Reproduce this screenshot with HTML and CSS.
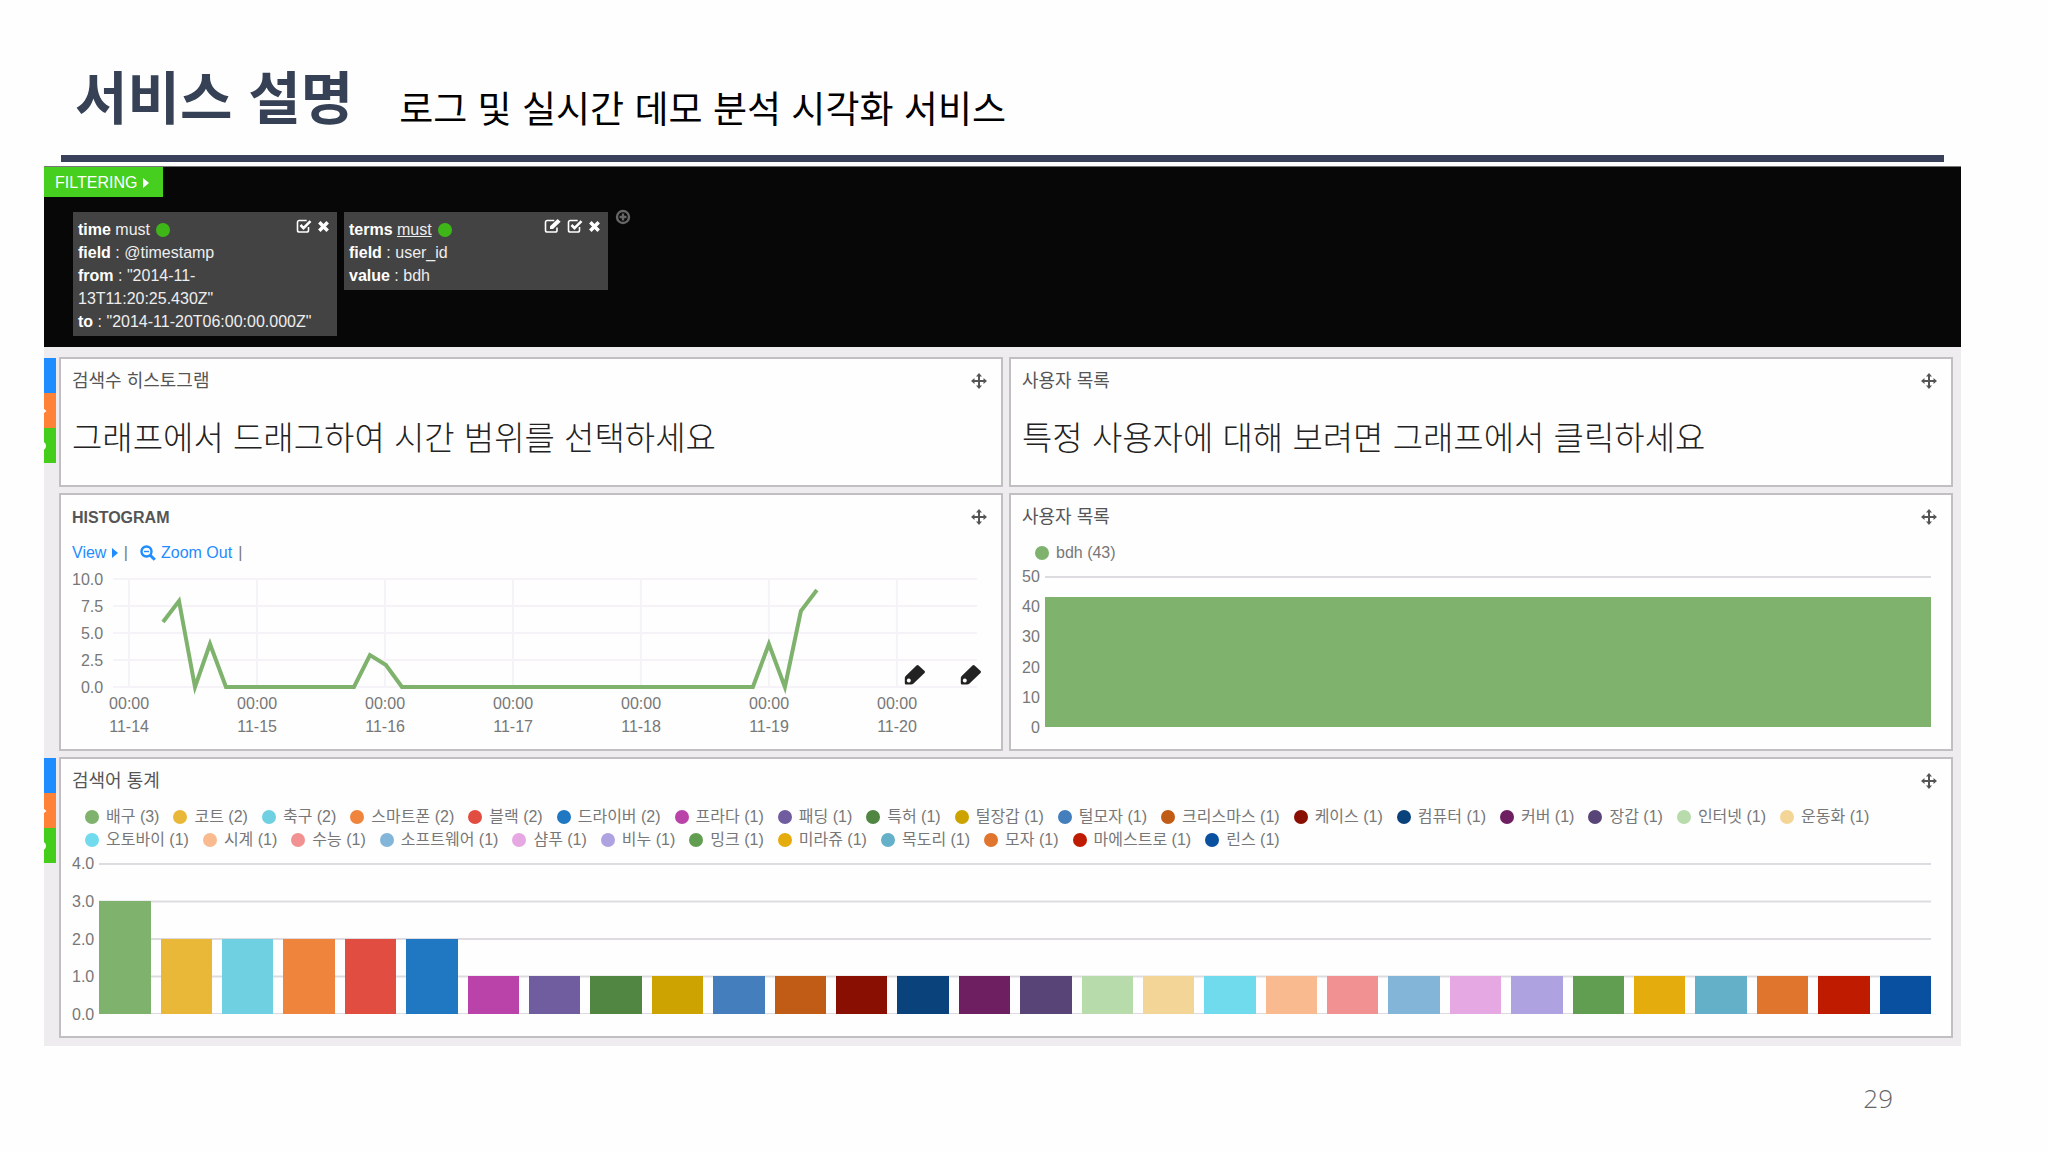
FILE: index.html
```html
<!DOCTYPE html>
<html lang="ko">

<head>
    <meta charset="UTF-8">
    <meta name="viewport" content="width=device-width, initial-scale=1.0">
    <title>서비스 설명</title>
    <link rel="stylesheet" href="styles.css">
</head>

<body>
    <!-- Icon set -->
    <svg class="icon-set" aria-hidden="true">
        <symbol id="icon-check" viewBox="0 0 16 16">
            <path d="M12.5 9v3.2a1.8 1.8 0 0 1-1.8 1.8H3.3a1.8 1.8 0 0 1-1.8-1.8V4.3a1.8 1.8 0 0 1 1.8-1.8h7.4" fill="none" stroke="currentColor" stroke-width="1.6" />
            <path d="M4.5 7l3 3.2L14.5 3.2" fill="none" stroke="currentColor" stroke-width="2.6" />
        </symbol>
        <symbol id="icon-edit" viewBox="0 0 18 16">
            <path d="M13 9.5v2.7a1.8 1.8 0 0 1-1.8 1.8H3.3a1.8 1.8 0 0 1-1.8-1.8V4.3a1.8 1.8 0 0 1 1.8-1.8h7" fill="none" stroke="currentColor" stroke-width="1.6" />
            <path d="M6 11V8.3L13.6 1l3 2.8L9 11z" fill="currentColor" />
        </symbol>
        <symbol id="icon-remove" viewBox="0 0 14 14">
            <path d="M2.5 2.5l9 9M11.5 2.5l-9 9" stroke="currentColor" stroke-width="3.8" />
        </symbol>
        <symbol id="icon-add" viewBox="0 0 16 16">
            <circle cx="8" cy="8" r="6" fill="none" stroke="currentColor" stroke-width="2.4" />
            <path d="M8 4.5v7M4.5 8h7" stroke="currentColor" stroke-width="2.4" />
        </symbol>
        <symbol id="icon-move" viewBox="0 0 16 16">
            <path d="M8 2v12M2 8h12" stroke="currentColor" stroke-width="2" />
            <path d="M8 0l3 3.5H5zM8 16l-3-3.500h6zM0 8l3.500-3v6zM16 8l-3.500 3V5z" fill="currentColor" />
        </symbol>
        <symbol id="icon-zoom-out" viewBox="0 0 16 16">
            <circle cx="6.500" cy="6.500" r="5" fill="none" stroke="currentColor" stroke-width="2.400" />
            <path d="M4 6.500h5" stroke="currentColor" stroke-width="1.400" />
            <path d="M10 10l4.800 4.800" stroke="currentColor" stroke-width="3" />
        </symbol>
        <symbol id="icon-caret" viewBox="0 0 6 10">
            <path d="M0 0l6 5-6 5z" fill="currentColor" />
        </symbol>
        <symbol id="icon-tag" viewBox="0 0 22 22">
            <path fill-rule="evenodd" d="M12.500 1.500Q13.500 .5 14.600 1.400L20.600 7Q21.500 8 20.500 9L9.500 19.600Q8.500 20.500 7 20.500H2Q.8 20.500 .8 19.300V14Q.8 12.800 1.700 12zM4.800 14.500a2 2 0 1 0 .01 0z" fill="currentColor" />
        </symbol>
    </svg>

    <header class="slide-header">
        <h1>서비스 설명</h1>
        <p>로그 및 실시간 데모 분석 시각화 서비스</p>
    </header>

    <main class="dashboard">
        <section class="filtering">
            <button type="button" class="filtering-toggle">FILTERING <svg class="caret"><use href="#icon-caret" /></svg></button>
            <div class="filters">
                <div class="filter">
                    <div class="filter-actions">
                        <button type="button" aria-label="Toggle"><svg><use href="#icon-check" /></svg></button>
                        <button type="button" aria-label="Remove"><svg class="small"><use href="#icon-remove" /></svg></button>
                    </div>
                    <div><b>time</b> must <span class="dot"></span></div>
                    <div><b>field</b> : @timestamp</div>
                    <div><b>from</b> : "2014-11-<wbr>13T11:20:25.430Z"</div>
                    <div><b>to</b> : "2014-11-20T06:00:00.000Z"</div>
                </div>
                <div class="filter">
                    <div class="filter-actions">
                        <button type="button" aria-label="Edit"><svg class="wide"><use href="#icon-edit" /></svg></button>
                        <button type="button" aria-label="Toggle"><svg><use href="#icon-check" /></svg></button>
                        <button type="button" aria-label="Remove"><svg class="small"><use href="#icon-remove" /></svg></button>
                    </div>
                    <div><b>terms</b> <a href="#">must</a> <span class="dot"></span></div>
                    <div><b>field</b> : user_id</div>
                    <div><b>value</b> : bdh</div>
                </div>
                <button type="button" class="filter-add" aria-label="Add"><svg><use href="#icon-add" /></svg></button>
            </div>
        </section>

        <section class="board-row">
            <div class="row-tabs">
                <button type="button" class="tab-blue" aria-label="Collapse"></button>
                <button type="button" class="tab-orange" aria-label="Configure"><svg viewBox="0 0 12 35"><path d="M0 16l2.500 2L0 20z" /></svg></button>
                <button type="button" class="tab-green" aria-label="Add panel"><svg viewBox="0 0 12 35"><circle cx="-2" cy="18" r="4" /></svg></button>
            </div>
            <div class="panels">
                <article class="panel">
                    <div class="panel-head">
                        <h2>검색수 히스토그램</h2>
                        <button type="button" aria-label="Move"><svg><use href="#icon-move" /></svg></button>
                    </div>
                    <p class="panel-text">그래프에서 드래그하여 시간 범위를 선택하세요</p>
                </article>

                <article class="panel">
                    <div class="panel-head">
                        <h2>사용자 목록</h2>
                        <button type="button" aria-label="Move"><svg><use href="#icon-move" /></svg></button>
                    </div>
                    <p class="panel-text">특정 사용자에 대해 보려면 그래프에서 클릭하세요</p>
                </article>

                <article class="panel">
                    <div class="panel-head">
                        <h2 class="latin">HISTOGRAM</h2>
                        <button type="button" aria-label="Move"><svg><use href="#icon-move" /></svg></button>
                    </div>
                    <div class="toolbar">
                        <a href="#">View <svg class="caret"><use href="#icon-caret" /></svg></a>
                        <span>|</span>
                        <a href="#" class="zoom-out"><svg><use href="#icon-zoom-out" /></svg> Zoom Out</a>
                        <span>|</span>
                    </div>
                    <div class="line-chart">
                        <div class="y-axis">
                            <span>10.0</span>
                            <span>7.5</span>
                            <span>5.0</span>
                            <span>2.5</span>
                            <span>0.0</span>
                        </div>
                        <div class="line-plot">
                            <svg class="plot" viewBox="0 0 864 108" preserveAspectRatio="none">
                                <path class="grid" d="M0 0H864M0 27H864M0 54H864M0 81H864M0 108H864M16 0V108M144 0V108M272 0V108M400 0V108M528 0V108M656 0V108M784 0V108" />
                                <polyline class="series" points="50,43 66,22 82,108 97,65 113,108 241,108 257,76 273,86 289,108 640,108 656,65 672,108 688,32 704,11" />
                            </svg>
                            <svg class="tag tag-first"><use href="#icon-tag" /></svg>
                            <svg class="tag tag-last"><use href="#icon-tag" /></svg>
                            <div class="x-axis">
                                <span>00:00<br>11-14</span>
                                <span>00:00<br>11-15</span>
                                <span>00:00<br>11-16</span>
                                <span>00:00<br>11-17</span>
                                <span>00:00<br>11-18</span>
                                <span>00:00<br>11-19</span>
                                <span>00:00<br>11-20</span>
                            </div>
                        </div>
                    </div>
                </article>

                <article class="panel">
                    <div class="panel-head">
                        <h2>사용자 목록</h2>
                        <button type="button" aria-label="Move"><svg><use href="#icon-move" /></svg></button>
                    </div>
                    <ul class="legend" id="userLegend"></ul>
                    <div class="bar-chart">
                        <div class="y-axis">
                            <span>50</span>
                            <span>40</span>
                            <span>30</span>
                            <span>20</span>
                            <span>10</span>
                            <span>0</span>
                        </div>
                        <div class="bars lines-5" id="userBars"></div>
                    </div>
                </article>
            </div>
        </section>

        <section class="board-row">
            <div class="row-tabs">
                <button type="button" class="tab-blue" aria-label="Collapse"></button>
                <button type="button" class="tab-orange" aria-label="Configure"><svg viewBox="0 0 12 35"><path d="M0 16l2.500 2L0 20z" /></svg></button>
                <button type="button" class="tab-green" aria-label="Add panel"><svg viewBox="0 0 12 35"><circle cx="-2" cy="18" r="4" /></svg></button>
            </div>
            <div class="panels">
                <article class="panel panel-full">
                    <div class="panel-head">
                        <h2>검색어 통계</h2>
                        <button type="button" aria-label="Move"><svg><use href="#icon-move" /></svg></button>
                    </div>
                    <ul class="legend" id="wordLegend"></ul>
                    <div class="bar-chart">
                        <div class="y-axis">
                            <span>4.0</span>
                            <span>3.0</span>
                            <span>2.0</span>
                            <span>1.0</span>
                            <span>0.0</span>
                        </div>
                        <div class="bars lines-4" id="wordBars"></div>
                    </div>
                </article>
            </div>
        </section>
    </main>

    <footer class="slide-footer">29</footer>

    <script src="script.js"></script>
</body>

</html>
```
FILE: styles.css
```css
/* Basic Reset */
* {
    box-sizing: border-box;
}

body {
    margin: 0;
    background-color: #fefefe;
    color: #777777;
    font-family: "Liberation Sans", "Noto Sans CJK KR", sans-serif;
    font-size: 16px;
    line-height: 23px;
}

h1,
h2,
p,
ul {
    margin: 0;
    padding: 0;
}

button {
    display: block;
    padding: 0;
    border: none;
    background: none;
    color: inherit;
    font: inherit;
    cursor: pointer;
}

svg {
    display: block;
    width: 16px;
    height: 16px;
}

.icon-set {
    display: none;
}

.caret {
    display: inline-block;
    width: 6px;
    height: 10px;
    margin-left: 1px;
}

/* Slide Header */
.slide-header {
    display: flex;
    align-items: flex-start;
    gap: 46px;
    margin: 0 104px 4px 61px;
    padding: 56px 14px 16px;
    border-bottom: 7px solid #38405a;
    font-family: "Noto Sans CJK KR", sans-serif;
}

.slide-header h1 {
    font-size: 57px;
    line-height: 76px;
    font-weight: 700;
    color: #364156;
}

.slide-header p {
    padding-top: 19px;
    font-size: 37px;
    line-height: 64px;
    color: #000000;
}

/* Dashboard */
.dashboard {
    margin: 0 87px 0 44px;
    padding-bottom: 8px;
    background-color: #eeecee;
}

/* Filtering */
.filtering {
    padding-bottom: 11px;
    border-top: 1px solid #777777;
    background-color: #070707;
    color: #eeeeee;
}

.filtering-toggle {
    height: 30px;
    padding: 0 14px 0 11px;
    background-color: #46cf1e;
    color: #ffffff;
}

.filters {
    display: flex;
    align-items: flex-start;
    gap: 7px;
    padding: 15px 29px 0;
}

.filter {
    width: 264px;
    padding: 6px 15px 3px 5px;
    background-color: #444344;
}

.filter b {
    color: #ffffff;
}

.filter a {
    color: inherit;
}

.filter-actions {
    float: right;
    display: flex;
    align-items: center;
    gap: 5px;
    margin-right: -8px;
    color: #ffffff;
}

.filter-actions .wide {
    width: 18px;
}

.filter-actions .small {
    width: 13px;
    height: 13px;
}

.dot {
    display: inline-block;
    flex: none;
    width: 14px;
    height: 14px;
    margin-left: 2px;
    border-radius: 50%;
    background-color: #3fb618;
    vertical-align: -2px;
}

.filter-add {
    margin-top: -3px;
    color: #666666;
}

/* Board Rows */
.board-row {
    display: flex;
    gap: 3px;
    padding: 10px 8px 0 0;
}

.board-row + .board-row {
    padding-top: 6px;
}

.row-tabs {
    flex: none;
    width: 12px;
    padding-top: 1px;
}

.row-tabs button {
    width: 12px;
    height: 35px;
}

.row-tabs svg {
    width: 12px;
    height: 35px;
    fill: #ffffff;
}

.tab-blue {
    background-color: #1f8cff;
}

.tab-orange {
    background-color: #ff8237;
}

.tab-green {
    background-color: #45cd1c;
}

.panels {
    flex: 1;
    display: grid;
    grid-template-columns: 1fr 1fr;
    gap: 6px;
}

/* Panels */
.panel {
    padding: 10px 11px;
    border: 2px solid #c1bfc1;
    background-color: #fefefe;
}

.panel-full {
    grid-column: span 2;
}

.panel-head {
    display: flex;
    align-items: center;
    justify-content: space-between;
    height: 24px;
    padding-right: 3px;
    color: #555555;
}

.panel-head h2 {
    font-size: 18px;
    font-weight: 400;
}

.panel-head .latin {
    font-size: 16px;
    font-weight: 700;
}

.panel-text {
    margin: 22px 0 12px;
    font-size: 33px;
    line-height: 48px;
    font-weight: 300;
    color: #222222;
}

.toolbar {
    display: flex;
    gap: 6px;
    margin-top: 12px;
}

.toolbar a {
    color: #1f8cff;
    text-decoration: none;
}

.zoom-out {
    display: flex;
    align-items: center;
    gap: 5px;
    padding-left: 6px;
}

/* Legend */
.legend {
    display: flex;
    flex-wrap: wrap;
    column-gap: 14px;
    margin-top: 12px;
    padding-left: 13px;
    list-style: none;
}

.legend li {
    display: flex;
    align-items: center;
    gap: 7px;
    white-space: nowrap;
}

.legend .dot {
    margin-left: 0;
}

/* Charts */
.y-axis {
    display: flex;
    flex-direction: column;
    justify-content: space-between;
    height: 174px;
    margin: -11px 0 -12px;
    text-align: right;
}

.bar-chart {
    display: flex;
    gap: 5px;
    margin: 12px 9px 12px 0;
}

.bars {
    flex: 1;
    display: flex;
    align-items: flex-end;
    gap: 10px;
    height: 151px;
}

.bar {
    flex: 1;
}

.lines-4,
.lines-5 {
    background-image: linear-gradient(#dddbdf 2px, transparent 2px);
}

.lines-4 {
    background-size: 100% calc((100% - 1px) / 4);
}

.lines-5 {
    background-repeat: no-repeat;
}

.line-chart {
    display: flex;
    gap: 10px;
    margin-top: 15px;
}

.line-chart .y-axis {
    height: 131px;
}

.line-plot {
    position: relative;
    flex: 1;
    margin-right: 13px;
}

.plot {
    width: 100%;
    height: 108px;
    overflow: visible;
    fill: none;
}

.plot .grid {
    stroke: #f5f3f7;
    stroke-width: 2;
    vector-effect: non-scaling-stroke;
}

.plot .series {
    stroke: #7eb26d;
    stroke-width: 4;
    vector-effect: non-scaling-stroke;
}

.tag {
    position: absolute;
    top: 85px;
    width: 22px;
    height: 22px;
    color: #222222;
}

.tag-first {
    right: 51px;
}

.tag-last {
    right: -5px;
}

.x-axis {
    display: grid;
    grid-template-columns: repeat(7, 1fr);
    margin: 5px 16px 0 -48px;
    text-align: center;
}

/* Slide Footer */
.slide-footer {
    padding: 34px 155px 0 0;
    font-family: "Open Sans", "Noto Sans", sans-serif;
    font-size: 26px;
    line-height: 36px;
    font-weight: 300;
    color: #666666;
    text-align: right;
}
```
FILE: script.js
```js
const users = [
    ['bdh', 43, '#7eb26d']
];

const words = [
    ['배구', 3, '#7eb26d'],
    ['코트', 2, '#eab839'],
    ['축구', 2, '#6ed0e0'],
    ['스마트폰', 2, '#ef843c'],
    ['블랙', 2, '#e24d42'],
    ['드라이버', 2, '#1f78c1'],
    ['프라다', 1, '#ba43a9'],
    ['패딩', 1, '#705da0'],
    ['특허', 1, '#508642'],
    ['털장갑', 1, '#cca300'],
    ['털모자', 1, '#447ebc'],
    ['크리스마스', 1, '#c15c17'],
    ['케이스', 1, '#890f02'],
    ['컴퓨터', 1, '#0a437c'],
    ['커버', 1, '#6d1f62'],
    ['장갑', 1, '#584477'],
    ['인터넷', 1, '#b7dbab'],
    ['운동화', 1, '#f4d598'],
    ['오토바이', 1, '#70dbed'],
    ['시계', 1, '#f9ba8f'],
    ['수능', 1, '#f29191'],
    ['소프트웨어', 1, '#82b5d8'],
    ['샴푸', 1, '#e5a8e2'],
    ['비누', 1, '#aea2e0'],
    ['밍크', 1, '#629e51'],
    ['미라쥬', 1, '#e5ac0e'],
    ['목도리', 1, '#64b0c8'],
    ['모자', 1, '#e0752d'],
    ['마에스트로', 1, '#bf1b00'],
    ['린스', 1, '#0a50a1']
];

function drawTerms(name, terms, max) {
    const legend = document.getElementById(name + 'Legend');
    const bars = document.getElementById(name + 'Bars');

    terms.forEach(function ([term, count, color]) {
        const item = document.createElement('li');
        const dot = document.createElement('span');
        dot.className = 'dot';
        dot.style.backgroundColor = color;
        item.append(dot, term + ' (' + count + ')');
        legend.appendChild(item);

        const bar = document.createElement('div');
        bar.className = 'bar';
        bar.style.height = (count / max * 100) + '%';
        bar.style.backgroundColor = color;
        bars.appendChild(bar);
    });
}

drawTerms('user', users, 50);
drawTerms('word', words, 4);
```
